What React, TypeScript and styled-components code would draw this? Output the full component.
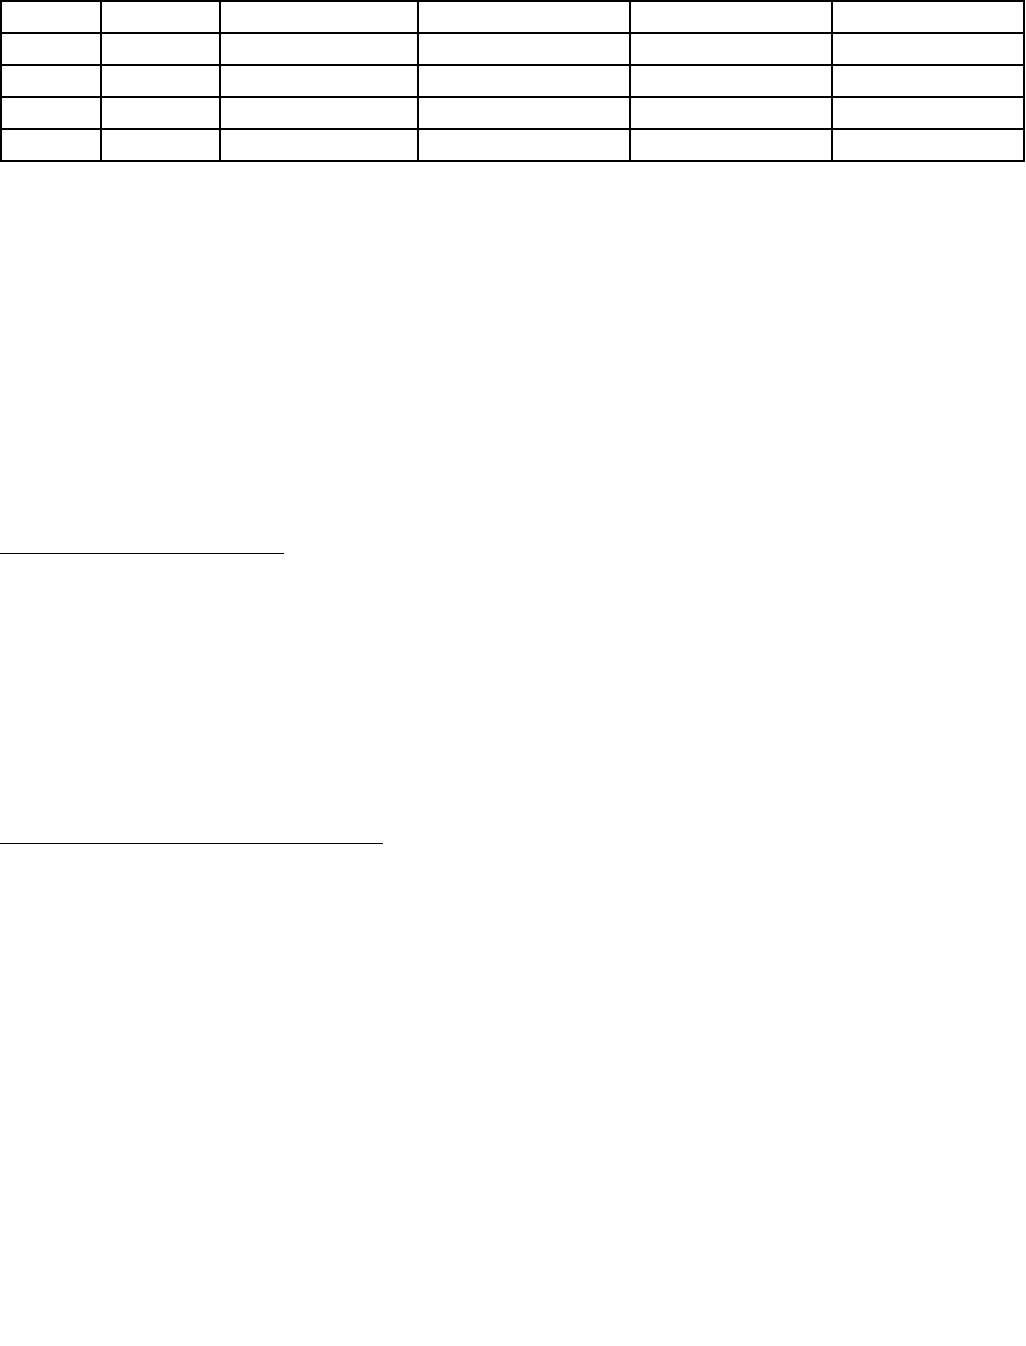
import styled, { createGlobalStyle } from "styled-components";

const GlobalStyle = createGlobalStyle`
  html, body {
    margin: 0;
    padding: 0;
    background: #ffffff;
    font-family: "Liberation Serif", "Times New Roman", serif;
  }
`;

const Page = styled.div`
  width: 1026px;
  min-height: 1346px;
  display: flex;
  flex-direction: column;
  background: #ffffff;
`;

const Grid = styled.table`
  border-collapse: separate;
  border-spacing: 0;
  table-layout: fixed;
  border-top: 2px solid #000;
  border-left: 2px solid #000;
  width: 1025px;
`;

const Cell = styled.td<{ $w: number }>`
  box-sizing: border-box;
  width: ${(props) => props.$w}px;
  height: 32px;
  padding: 0;
  border-right: 2px solid #000;
  border-bottom: 2px solid #000;
`;

const BlankLine = styled.div<{ $w: number; $top: number }>`
  width: ${(props) => props.$w}px;
  margin-top: ${(props) => props.$top}px;
  border-bottom: 1px solid #000;
`;

const columns = [100, 119, 198, 212, 202, 192];
const rows = [0, 1, 2, 3, 4];

export default function App() {
  return (
    <>
      <GlobalStyle />
      <Page>
        <Grid>
          <tbody>
            {rows.map((r) => (
              <tr key={r}>
                {columns.map((w, i) => (
                  <Cell key={i} $w={w} />
                ))}
              </tr>
            ))}
          </tbody>
        </Grid>
        <BlankLine $w={284} $top={391} />
        <BlankLine $w={383} $top={289} />
      </Page>
    </>
  );
}
